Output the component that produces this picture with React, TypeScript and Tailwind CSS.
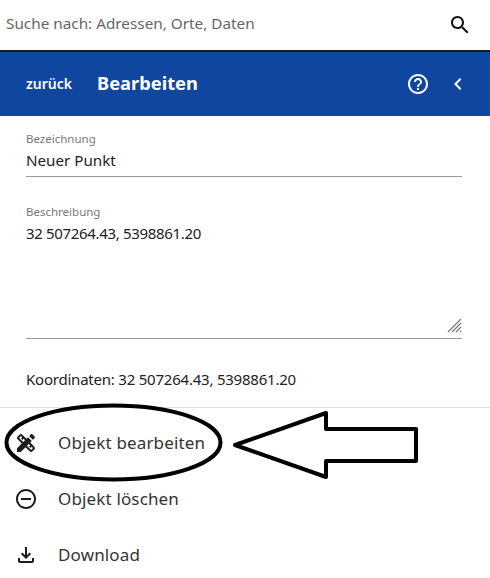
const font = "[font-family:'Noto_Sans',sans-serif]";

function Icon({ d, className }: { d: string; className?: string }) {
  return (
    <svg viewBox="0 0 24 24" fill="currentColor" className={className}>
      <path d={d} />
    </svg>
  );
}

const icons = {
  search:
    "M15.5 14h-.79l-.28-.27C15.41 12.59 16 11.11 16 9.5 16 5.91 13.09 3 9.5 3S3 5.91 3 9.5 5.91 16 9.5 16c1.61 0 3.09-.59 4.23-1.57l.27.28v.79l5 4.99L20.49 19l-4.99-5zm-6 0C7.01 14 5 11.99 5 9.5S7.01 5 9.5 5 14 7.01 14 9.5 11.99 14 9.5 14z",
  help:
    "M11 18h2v-2h-2v2zm1-16C6.48 2 2 6.48 2 12s4.48 10 10 10 10-4.48 10-10S17.52 2 12 2zm0 18c-4.41 0-8-3.59-8-8s3.59-8 8-8 8 3.59 8 8-3.59 8-8 8zm0-14c-2.21 0-4 1.79-4 4h2c0-1.1.9-2 2-2s2 .9 2 2c0 2-3 1.75-3 5h2c0-2.25 3-2.5 3-5 0-2.21-1.79-4-4-4z",
  chevron: "M15.41 7.41L14 6l-6 6 6 6 1.41-1.41L10.83 12z",
  design:
    "M16.24 11.51l1.57-1.57-3.75-3.75-1.57 1.57-4.14-4.13c-.78-.78-2.05-.78-2.83 0l-1.9 1.9c-.78.78-.78 2.05 0 2.83l4.13 4.13L3 17.25V21h3.75l4.76-4.76 4.13 4.13c.95.95 2.23.6 2.83 0l1.9-1.9c.78-.78.78-2.05 0-2.83l-4.13-4.13zm-7.06-.44L5.04 6.94l1.89-1.9L8.2 6.31 7.02 7.5l1.41 1.41 1.19-1.19 1.45 1.45-1.89 1.9zm7.88 7.89l-4.13-4.14 1.9-1.9 1.45 1.45-1.19 1.19 1.41 1.41 1.19-1.19 1.27 1.27-1.9 1.91zM20.71 7.04c.39-.39.39-1.02 0-1.41l-2.34-2.34c-.47-.47-1.12-.29-1.41 0l-1.83 1.83 3.75 3.75 1.83-1.83z",
  remove:
    "M7 11v2h10v-2H7zm5-9C6.48 2 2 6.48 2 12s4.48 10 10 10 10-4.48 10-10S17.52 2 12 2zm0 18c-4.41 0-8-3.59-8-8s3.59-8 8-8 8 3.59 8 8-3.59 8-8 8z",
  download:
    "M18 15v3H6v-3H4v3c0 1.1.9 2 2 2h12c1.1 0 2-.9 2-2v-3h-2zm-1-4l-1.41-1.41L13 12.17V4h-2v8.17L8.41 9.59 7 11l5 5 5-5z",
};

function MenuItem({ icon, label }: { icon: string; label: string }) {
  return (
    <div className="flex h-14 items-center pl-[14px]">
      <Icon d={icon} className="h-6 w-6 text-[#1c1c1c]" />
      <span className="ml-5 text-[17px] tracking-[0.15px] text-[#333]">{label}</span>
    </div>
  );
}

export default function App() {
  return (
    <div className={`relative h-[578px] w-[490px] overflow-hidden bg-white ${font}`}>
      {/* Search */}
      <div className="flex h-[50px] items-center justify-between pl-[6px] pr-[18px]">
        <span className="pb-1 text-[15.3px] text-[#666]">Suche nach: Adressen, Orte, Daten</span>
        <Icon d={icons.search} className="h-6 w-6 text-[#111]" />
      </div>
      <div className="h-[2px] bg-[#1a1a1a]" />

      {/* Header */}
      <div className="flex h-[64px] items-center bg-[#0f47a0] text-white">
        <span className="mb-[2px] ml-[26px] w-[71px] text-[14px] font-semibold">zurück</span>
        <span className="mb-[2px] text-[18.3px] font-bold">Bearbeiten</span>
        <Icon d={icons.help} className="ml-auto h-6 w-6" />
        <Icon d={icons.chevron} className="ml-4 mr-5 h-6 w-6" />
      </div>

      {/* Form */}
      <div className="pl-[26px] pr-[28px]">
        <div className="mt-[15px] border-b border-[#999] pb-[4px]">
          <div className="text-[11.5px] leading-4 text-[#777]">Bezeichnung</div>
          <div className="mt-[1px] text-[15.2px] leading-6 text-[#222]">Neuer Punkt</div>
        </div>
        <div className="relative mt-[27px] h-[135px] border-b border-[#999]">
          <div className="text-[11.5px] leading-4 text-[#777]">Beschreibung</div>
          <div className="mt-[1px] text-[15px] leading-6 tracking-[-0.33px] text-[#222]">32 507264.43, 5398861.20</div>
          <svg viewBox="0 0 15 15" className="absolute bottom-[5px] right-0 h-[15px] w-[15px] text-[#777]">
            <path d="M1 14 14 1M5 14l9-9M9 14l5-5M13 14l1-1" stroke="currentColor" strokeWidth="1.2" fill="none" />
          </svg>
        </div>
        <div className="mt-[28px] text-[15px] leading-6 tracking-[-0.22px] text-[#222]">
          Koordinaten: 32 507264.43, 5398861.20
        </div>
      </div>
      <div className="mt-[16px] border-t border-[#e0e0e0] pt-[7px]">
        <MenuItem icon={icons.design} label="Objekt bearbeiten" />
        <MenuItem icon={icons.remove} label="Objekt löschen" />
        <MenuItem icon={icons.download} label="Download" />
      </div>

      {/* Hand drawn annotation on top of the screenshot */}
      <svg viewBox="0 0 490 578" className="pointer-events-none absolute inset-0 h-full w-full" fill="none" stroke="#000">
        <ellipse cx="113.5" cy="442.5" rx="107" ry="37" strokeWidth="4" />
        <path d="M235 445 326 413V429H416V461H326V477Z" strokeWidth="4" strokeLinejoin="round" />
      </svg>
    </div>
  );
}
